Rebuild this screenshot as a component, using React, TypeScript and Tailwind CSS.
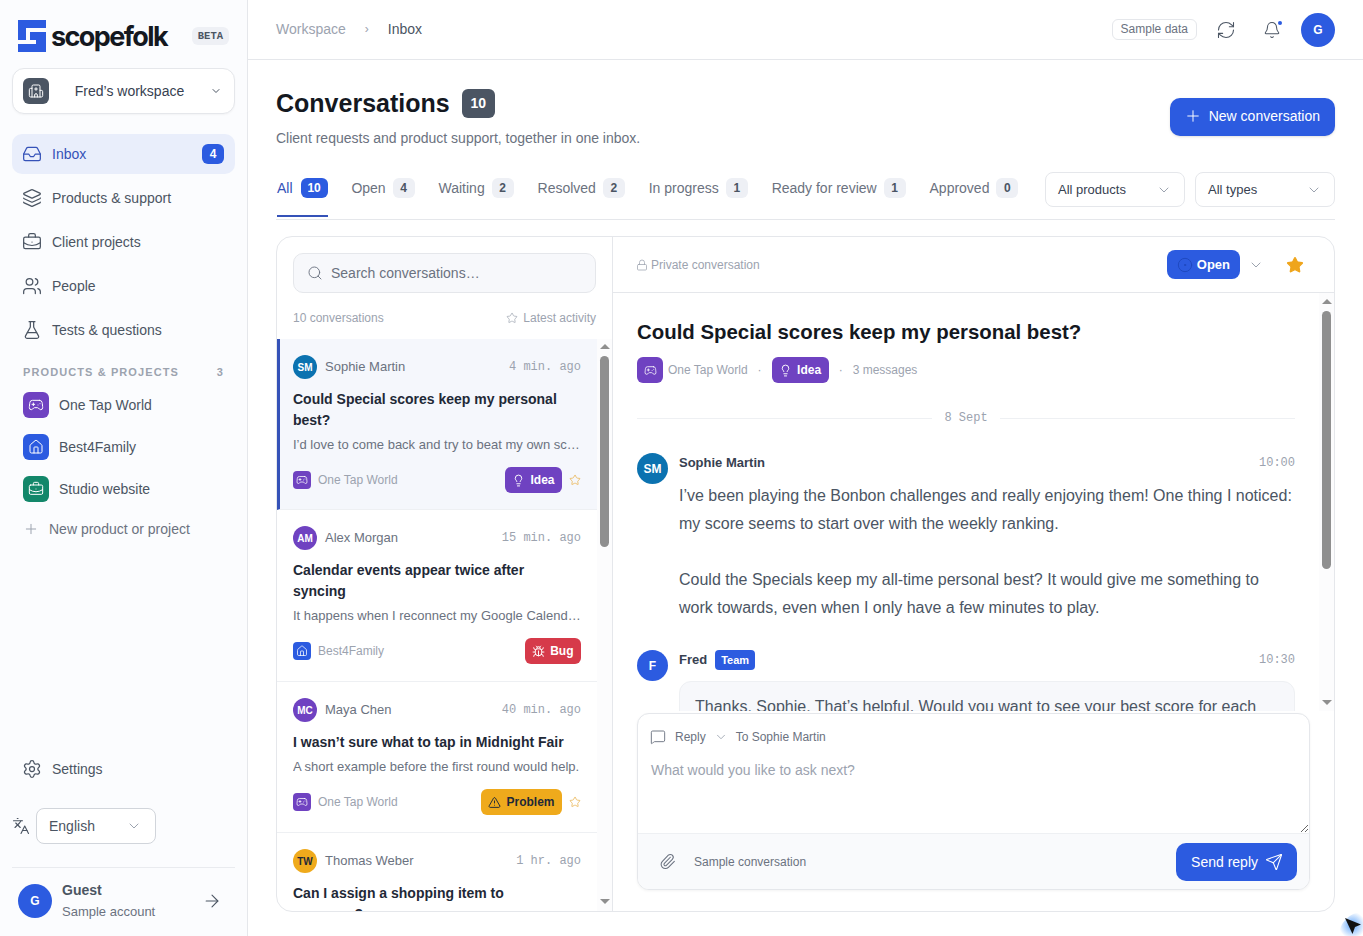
import {
  ArrowRight,
  Bell,
  BriefcaseBusiness,
  Bug,
  ChevronDown,
  CircleDot,
  FlaskConical,
  Gamepad2,
  Hospital,
  House,
  Inbox,
  Languages,
  Layers,
  Lightbulb,
  Lock,
  MessageSquare,
  Paperclip,
  Plus,
  RefreshCw,
  Search,
  Send,
  Settings,
  Star,
  TriangleAlert,
  Users,
} from 'lucide-react';

const navItems = [
  { label: 'Products & support', icon: Layers },
  { label: 'Client projects', icon: BriefcaseBusiness },
  { label: 'People', icon: Users },
  { label: 'Tests & questions', icon: FlaskConical },
];

const projects = [
  { label: 'One Tap World', icon: Gamepad2, color: 'bg-[#6f42c1]' },
  { label: 'Best4Family', icon: House, color: 'bg-[#2c5be0]' },
  { label: 'Studio website', icon: BriefcaseBusiness, color: 'bg-[#13876a]' },
];

const tabs = [
  { label: 'Open', count: 4 },
  { label: 'Waiting', count: 2 },
  { label: 'Resolved', count: 2 },
  { label: 'In progress', count: 1 },
  { label: 'Ready for review', count: 1 },
  { label: 'Approved', count: 0 },
];

type Kind = 'idea' | 'bug' | 'problem';

const conversations: {
  initials: string;
  name: string;
  color: string;
  time: string;
  title: string;
  preview: string;
  product: string;
  kind: Kind;
  star?: boolean;
  active?: boolean;
}[] = [
  {
    initials: 'SM',
    name: 'Sophie Martin',
    color: 'bg-[#0b72b0] text-white',
    time: '4 min. ago',
    title: 'Could Special scores keep my personal best?',
    preview: 'I’d love to come back and try to beat my own score each week.',
    product: 'One Tap World',
    kind: 'idea',
    star: true,
    active: true,
  },
  {
    initials: 'AM',
    name: 'Alex Morgan',
    color: 'bg-[#6f42c1] text-white',
    time: '15 min. ago',
    title: 'Calendar events appear twice after syncing',
    preview: 'It happens when I reconnect my Google Calendar account.',
    product: 'Best4Family',
    kind: 'bug',
  },
  {
    initials: 'MC',
    name: 'Maya Chen',
    color: 'bg-[#6f42c1] text-white',
    time: '40 min. ago',
    title: 'I wasn’t sure what to tap in Midnight Fair',
    preview: 'A short example before the first round would help.',
    product: 'One Tap World',
    kind: 'problem',
    star: true,
  },
  {
    initials: 'TW',
    name: 'Thomas Weber',
    color: 'bg-[#efaa1c] text-[#1f2937]',
    time: '1 hr. ago',
    title: 'Can I assign a shopping item to someone?',
    preview: 'It would help us split the list between the two of us.',
    product: 'Best4Family',
    kind: 'idea',
  },
];

const productMeta: Record<string, { icon: typeof House; color: string }> = {
  'One Tap World': { icon: Gamepad2, color: 'bg-[#6f42c1]' },
  Best4Family: { icon: House, color: 'bg-[#2c5be0]' },
  'Studio website': { icon: BriefcaseBusiness, color: 'bg-[#13876a]' },
};

const kindMeta = {
  idea: { label: 'Idea', icon: Lightbulb, color: 'bg-[#6f42c1] text-white' },
  bug: { label: 'Bug', icon: Bug, color: 'bg-[#d63a4a] text-white' },
  problem: { label: 'Problem', icon: TriangleAlert, color: 'bg-[#efaa1c] text-[#1f2937]' },
};

function KindBadge({ kind }: { kind: Kind }) {
  const meta = kindMeta[kind];
  const Icon = meta.icon;
  return (
    <span className={`flex h-[26px] items-center gap-[5px] rounded-md px-[7.5px] text-xs font-bold ${meta.color}`}>
      <Icon size={13} strokeWidth={1.75} />
      {meta.label}
    </span>
  );
}

function Scrollbar({ thumbHeight, topPad, bottomPad }: { thumbHeight: number; topPad: number; bottomPad: number }) {
  return (
    <div
      className="flex w-[15px] shrink-0 flex-col items-center bg-[#fcfcfd]"
      style={{ paddingTop: topPad, paddingBottom: bottomPad }}
    >
      <span className="h-0 w-0 border-x-[5px] border-b-[5px] border-x-transparent border-b-[#8f8f8f]" />
      <span className="mt-[7px] w-[9px] rounded-full bg-[#8f8f8f]" style={{ height: thumbHeight }} />
      <span className="mt-auto h-0 w-0 border-x-[5px] border-t-[5px] border-x-transparent border-t-[#8f8f8f]" />
    </div>
  );
}

function Logo() {
  return (
    <svg width="28" height="32" viewBox="0 0 28 32" className="shrink-0">
      <path fill="#2c5be0" d="M0 0H28V8H8V20H0Z" />
      <path fill="#2c5be0" d="M12 12H28V32H0V24H18V20H12Z" />
    </svg>
  );
}

function Sidebar() {
  return (
    <aside className="flex w-[248px] shrink-0 flex-col border-r border-[#e5e7eb] bg-[#fbfcfe] px-3">
      <div className="flex h-[68px] shrink-0 items-center justify-between pl-[6px] pr-[6px] pt-[4px]">
        <div className="flex items-center gap-[5px]">
          <Logo />
          <span className="font-['Inter',sans-serif] text-[27px] font-bold leading-none tracking-[-1.6px] text-[#14181f]">
            scopefolk
          </span>
        </div>
        <span className="rounded-md bg-[#eef0f5] px-[6px] py-[2px] font-['Liberation_Mono',monospace] text-[10.5px] font-bold leading-[14px] text-[#4b5563]">
          BETA
        </span>
      </div>
      <button className="flex h-[46px] shrink-0 items-center rounded-xl border border-[#e5e7eb] bg-white pl-[10px] pr-[12px] shadow-[0_1px_2px_rgba(0,0,0,0.04)]">
        <span className="flex h-[26px] w-[26px] items-center justify-center rounded-md bg-[#4b5563] text-white">
          <Hospital size={16} strokeWidth={1.5} />
        </span>
        <span className="flex-1 text-center text-sm text-[#374151]">Fred’s workspace</span>
        <ChevronDown size={12} className="text-[#4b5563]" />
      </button>
      <nav className="mt-[20px] flex flex-col gap-1">
        <a className="flex h-10 items-center gap-[10px] rounded-[10px] bg-[#e9eefb] px-[10px] pr-[11px] text-sm text-[#3552b8]">
          <Inbox size={20} strokeWidth={1.5} />
          <span className="flex-1">Inbox</span>
          <span className="flex h-5 w-[22px] items-center justify-center rounded-md bg-[#2c5be0] text-xs font-bold text-white">
            4
          </span>
        </a>
        {navItems.map((item) => (
          <a key={item.label} className="flex h-10 items-center gap-[10px] px-[10px] text-sm text-[#4b5563]">
            <item.icon size={20} strokeWidth={1.5} />
            {item.label}
          </a>
        ))}
      </nav>
      <div className="mt-[14px] flex items-center justify-between px-[11px] text-[11px] font-bold tracking-[1.1px] text-[#9ca3af]">
        <span>PRODUCTS &amp; PROJECTS</span>
        <span>3</span>
      </div>
      <div className="mt-[11px] flex flex-col gap-[16px] px-[11px]">
        {projects.map((project) => (
          <div key={project.label} className="flex h-[26px] items-center gap-[10px] text-sm text-[#4b5563]">
            <span className={`flex h-[26px] w-[26px] items-center justify-center rounded-md text-white ${project.color}`}>
              <project.icon size={16} strokeWidth={1.5} />
            </span>
            {project.label}
          </div>
        ))}
      </div>
      <div className="mt-[17px] flex items-center gap-[10px] px-[11px] text-sm text-[#6b7280]">
        <Plus size={16} strokeWidth={1.5} className="text-[#9ca3af]" />
        New product or project
      </div>
      <div className="mt-auto flex h-10 items-center gap-[10px] px-[10px] text-sm text-[#4b5563]">
        <Settings size={20} strokeWidth={1.5} />
        Settings
      </div>
      <div className="mt-[19px] flex items-center gap-[6px] pb-[23px]">
        <Languages size={18} strokeWidth={1.5} className="text-[#4b5563]" />
        <div className="flex h-9 w-[120px] items-center justify-between rounded-lg border border-[#d1d5db] bg-white pl-[12px] pr-[13px] text-sm text-[#4b5563]">
          English
          <ChevronDown size={16} strokeWidth={1.5} className="text-[#9ca3af]" />
        </div>
      </div>
      <div className="flex h-[69px] shrink-0 items-center gap-[10px] border-t border-[#e9ebef] px-[6px] pb-[3px]">
        <span className="flex h-[34px] w-[34px] items-center justify-center rounded-full bg-[#2c5be0] text-xs font-bold text-white">
          G
        </span>
        <div className="flex-1">
          <div className="text-sm font-bold leading-[21px] text-[#4b5563]">Guest</div>
          <div className="text-[13px] leading-[21px] text-[#6b7280]">Sample account</div>
        </div>
        <ArrowRight size={20} strokeWidth={1.3} className="mr-[7px] text-[#4b5563]" />
      </div>
    </aside>
  );
}

function TopBar() {
  return (
    <header className="flex h-[60px] shrink-0 items-center justify-between border-b border-[#e5e7eb] pl-7 pr-7">
      <div className="flex items-center gap-[19px] pb-[2px] text-sm">
        <span className="text-[#9ca3af]">Workspace</span>
        <span className="text-xs text-[#9ca3af]">›</span>
        <span className="text-[#4b5563]">Inbox</span>
      </div>
      <div className="flex items-center">
        <span className="rounded-md border border-[#e5e7eb] px-2 py-[2px] text-xs leading-[15px] text-[#6b7280]">
          Sample data
        </span>
        <RefreshCw size={20} strokeWidth={1.3} className="ml-[19px] text-[#4b5563]" />
        <span className="relative ml-[27px]">
          <Bell size={18} strokeWidth={1.4} className="text-[#4b5563]" />
          <span className="absolute right-[-1px] top-0 h-[4px] w-[4px] rounded-full bg-[#2c5be0]" />
        </span>
        <span className="ml-[20px] flex h-[34px] w-[34px] items-center justify-center rounded-full bg-[#2c5be0] text-xs font-bold text-white">
          G
        </span>
      </div>
    </header>
  );
}

function Tabs() {
  return (
    <div className="mt-[24px] flex h-[48px] shrink-0 items-start justify-between border-b border-[#e5e7eb]">
      <div className="flex gap-[23.85px] pl-px">
        <div className="flex h-[45px] items-start gap-[8px] border-b-2 border-[#3552b8] pt-[6px]">
          <span className="text-sm leading-[20px] text-[#3552b8]">All</span>
          <span className="flex h-5 w-[27px] items-center justify-center rounded-md bg-[#2c5be0] text-xs font-bold text-white">
            10
          </span>
        </div>
        {tabs.map((tab) => (
          <div key={tab.label} className="flex items-start gap-[7px] pt-[6px]">
            <span className="text-sm leading-[20px] text-[#6b7280]">{tab.label}</span>
            <span className="flex h-5 w-[22px] items-center justify-center rounded-md bg-[#eef0f5] text-xs font-bold text-[#4b5563]">
              {tab.count}
            </span>
          </div>
        ))}
      </div>
      <div className="flex gap-[10px]">
        <div className="flex h-[35px] w-[140px] items-center justify-between rounded-lg border border-[#e5e7eb] pl-3 pr-[12px] text-[13px] text-[#374151]">
          All products
          <ChevronDown size={16} strokeWidth={1.5} className="text-[#9ca3af]" />
        </div>
        <div className="flex h-[35px] w-[140px] items-center justify-between rounded-lg border border-[#e5e7eb] pl-3 pr-[12px] text-[13px] text-[#374151]">
          All types
          <ChevronDown size={16} strokeWidth={1.5} className="text-[#9ca3af]" />
        </div>
      </div>
    </div>
  );
}

function ConversationRow({ item }: { item: (typeof conversations)[number] }) {
  const product = productMeta[item.product];
  return (
    <div
      className={`border-b border-[#eef0f3] pr-[16px] pt-[16px] ${
        item.active ? 'border-l-[3px] bg-[#f5f7fc] pb-[16px] pl-[13px] [border-left-color:#3552b8]' : 'pb-[17px] pl-[16px]'
      }`}
    >
      <div className="flex h-[24px] items-center gap-2">
        <span className={`flex h-6 w-6 items-center justify-center rounded-full text-[10px] font-bold ${item.color}`}>
          {item.initials}
        </span>
        <span className="flex-1 text-[13px] text-[#6b7280]">{item.name}</span>
        <span className="font-['Liberation_Mono',monospace] text-xs text-[#9ca3af]">{item.time}</span>
      </div>
      <div className="mt-[10px] pr-[8px] text-sm font-bold leading-[21px] text-[#1f2937]">{item.title}</div>
      <div className="mt-[4px] truncate text-[13px] leading-[20px] text-[#6b7280]">{item.preview}</div>
      <div className="mt-[12px] flex h-[26px] items-center">
        <span className={`flex h-[18px] w-[18px] items-center justify-center rounded-[4px] text-white ${product.color}`}>
          <product.icon size={12} strokeWidth={1.5} />
        </span>
        <span className="ml-[7px] flex-1 text-xs text-[#9ca3af]">{item.product}</span>
        <KindBadge kind={item.kind} />
        {item.star && <Star size={12} strokeWidth={1.5} className="ml-[7px] text-[#e8b04a]" />}
      </div>
    </div>
  );
}

function ListPane() {
  return (
    <div className="flex w-[336px] shrink-0 flex-col border-r border-[#e5e7eb]">
      <div className="px-4 pt-4">
        <div className="flex h-10 items-center gap-[8px] rounded-[10px] border border-[#e5e7eb] bg-[#f7f8fb] px-[13px] text-sm text-[#6b7280]">
          <Search size={16} strokeWidth={1.4} className="text-[#6b7280]" />
          Search conversations…
        </div>
        <div className="mt-[15px] flex h-[20px] items-center justify-between text-xs text-[#9ca3af]">
          <span>10 conversations</span>
          <span className="flex items-center gap-[5px]">
            <Star size={12} strokeWidth={1.4} />
            Latest activity
          </span>
        </div>
      </div>
      <div className="mt-[11px] flex min-h-0 flex-1">
        <div className="min-w-0 flex-1 overflow-hidden">
          {conversations.map((item) => (
            <ConversationRow key={item.initials} item={item} />
          ))}
        </div>
        <Scrollbar topPad={5} bottomPad={7} thumbHeight={191} />
      </div>
    </div>
  );
}

function Message({ initials, name, time, team, bubble, paragraphs }: {
  initials: string;
  name: string;
  time: string;
  team?: boolean;
  bubble?: boolean;
  paragraphs: string[];
}) {
  return (
    <div className="flex gap-[11px]">
      <span
        className={`flex h-[31px] w-[31px] shrink-0 items-center justify-center rounded-full text-xs font-bold text-white ${
          team ? 'bg-[#2c5be0]' : 'bg-[#0b72b0]'
        }`}
      >
        {initials}
      </span>
      <div className="min-w-0 flex-1">
        <div className="flex h-[20px] items-center gap-2">
          <span className="text-[13px] font-bold text-[#374151]">{name}</span>
          {team && (
            <span className="rounded-[4px] bg-[#2c5be0] px-[6px] py-[2px] text-[11px] font-bold leading-[16px] text-white">
              Team
            </span>
          )}
          <span className="ml-auto font-['Liberation_Mono',monospace] text-xs text-[#9ca3af]">{time}</span>
        </div>
        <div
          className={`flex flex-col gap-[28px] text-base leading-[28px] text-[#4b5563] ${
            bubble ? 'mt-[11px] rounded-xl border border-[#eef0f3] bg-[#f7f8fb] px-[15px] py-[11px]' : 'mt-[9px]'
          }`}
        >
          {paragraphs.map((text) => (
            <p key={text}>{text}</p>
          ))}
        </div>
      </div>
    </div>
  );
}

function DetailPane() {
  return (
    <div className="flex min-w-0 flex-1 flex-col">
      <div className="flex h-[56px] shrink-0 items-center border-b border-[#e5e7eb] pl-[23px] pr-[30px]">
        <Lock size={12} strokeWidth={1.5} className="text-[#9ca3af]" />
        <span className="ml-[3px] text-xs text-[#9ca3af]">Private conversation</span>
        <span className="ml-auto flex h-[29px] items-center gap-[4px] rounded-lg bg-[#2c5be0] pl-[10px] pr-[10px] text-[13px] font-bold text-white">
          <CircleDot size={16} strokeWidth={1.5} className="text-[#1f49c0]" />
          Open
        </span>
        <ChevronDown size={16} strokeWidth={1.5} className="ml-[8px] text-[#9ca3af]" />
        <Star size={18} fill="#efa51c" strokeWidth={1.5} className="ml-[22px] text-[#efa51c]" />
      </div>
      <div className="flex min-h-0 flex-1">
        <div className="min-w-0 flex-1 overflow-hidden pl-[24px] pr-[24px]">
          <h2 className="mt-[27px] text-[20.4px] font-bold leading-[24px] text-[#14181f]">
            Could Special scores keep my personal best?
          </h2>
          <div className="mt-[13px] flex items-center text-xs text-[#9ca3af]">
            <span className="flex h-[26px] w-[26px] items-center justify-center rounded-md bg-[#6f42c1] text-white">
              <Gamepad2 size={13} strokeWidth={1.5} />
            </span>
            <span className="ml-[5px]">One Tap World</span>
            <span className="ml-[10px] mr-[10px]">·</span>
            <KindBadge kind="idea" />
            <span className="ml-[10px] mr-[10px]">·</span>
            <span>3 messages</span>
          </div>
          <div className="mt-[27px] flex items-center gap-3">
            <span className="h-px flex-1 bg-[#eef0f3]" />
            <span className="font-['Liberation_Mono',monospace] text-xs text-[#9ca3af]">8 Sept</span>
            <span className="h-px flex-1 bg-[#eef0f3]" />
          </div>
          <div className="mt-[27px] flex flex-col gap-[28px] pb-[24px]">
            <Message
              initials="SM"
              name="Sophie Martin"
              time="10:00"
              paragraphs={[
                'I’ve been playing the Bonbon challenges and really enjoying them! One thing I noticed: my score seems to start over with the weekly ranking.',
                'Could the Specials keep my all-time personal best? It would give me something to work towards, even when I only have a few minutes to play.',
              ]}
            />
            <Message
              initials="F"
              name="Fred"
              time="10:30"
              team
              bubble
              paragraphs={['Thanks, Sophie. That’s helpful. Would you want to see your best score for each game or only one overall?']}
            />
          </div>
        </div>
        <Scrollbar topPad={6} bottomPad={6} thumbHeight={258} />
      </div>
      <div className="mx-[24px] mb-[21px] mt-[2px] flex shrink-0 flex-col overflow-hidden rounded-xl border border-[#e5e7eb] bg-white shadow-[0_1px_3px_rgba(0,0,0,0.05)]">
        <div className="mt-[13px] flex h-[20px] items-center pl-[12px] text-xs text-[#6b7280]">
          <MessageSquare size={16} strokeWidth={1.4} />
          <span className="ml-[9px]">Reply</span>
          <ChevronDown size={14} strokeWidth={1.5} className="ml-[8px] text-[#9ca3af]" />
          <span className="ml-[8px]">To Sophie Martin</span>
        </div>
        <textarea
          className="block h-[86px] w-full resize-y bg-white px-[13px] pt-[13px] text-sm leading-[20px] outline-none placeholder:text-[#9ca3af]"
          placeholder="What would you like to ask next?"
        />
        <div className="flex h-[56px] items-center border-t border-[#eef0f3] bg-[#f9fafc] pl-[21px] pr-[12px]">
          <Paperclip size={17} strokeWidth={1.5} className="text-[#6b7280]" />
          <span className="ml-[18px] text-xs text-[#6b7280]">Sample conversation</span>
          <button className="ml-auto flex h-[38px] items-center gap-[7px] rounded-[10px] bg-[#2c5be0] pl-[15px] pr-[14px] text-sm text-white">
            Send reply
            <Send size={18} strokeWidth={1.4} />
          </button>
        </div>
      </div>
    </div>
  );
}

export default function App() {
  return (
    <div className="relative flex h-[936px] overflow-hidden bg-white font-['Liberation_Sans',Arial,sans-serif]">
      <Sidebar />
      <main className="flex min-w-0 flex-1 flex-col">
        <TopBar />
        <div className="flex min-h-0 flex-1 flex-col px-7 pb-6">
          <div className="mt-[27px] flex shrink-0 items-start justify-between">
            <div>
              <div className="flex items-center gap-3">
                <h1 className="text-[25px] font-bold leading-[32px] text-[#14181f]">Conversations</h1>
                <span className="flex h-[29px] w-[33px] items-center justify-center rounded-md bg-[#4b5563] text-sm font-bold text-white">
                  10
                </span>
              </div>
              <p className="mt-[9px] text-sm leading-[20px] text-[#6b7280]">
                Client requests and product support, together in one inbox.
              </p>
            </div>
            <button className="mt-[11px] flex h-[38px] items-center gap-[7px] rounded-[10px] bg-[#2c5be0] pb-[2px] pl-[14px] pr-[15px] text-sm text-white shadow-sm">
              <Plus size={18} strokeWidth={1.3} />
              New conversation
            </button>
          </div>
          <Tabs />
          <div className="mt-[16px] flex min-h-0 flex-1 overflow-hidden rounded-2xl border border-[#e5e7eb]">
            <ListPane />
            <DetailPane />
          </div>
        </div>
      </main>
      <div className="absolute bottom-0 right-0 h-[24px] w-[24px] rounded-tl-full bg-[radial-gradient(circle_at_55%_55%,#60a5fa,transparent_72%)]">
        <svg width="18" height="18" viewBox="0 0 18 18" className="absolute left-[6px] top-[6px]">
          <path fill="#111" d="M0 0l16 6.5-6 2.5-2.5 7z" />
        </svg>
      </div>
    </div>
  );
}
